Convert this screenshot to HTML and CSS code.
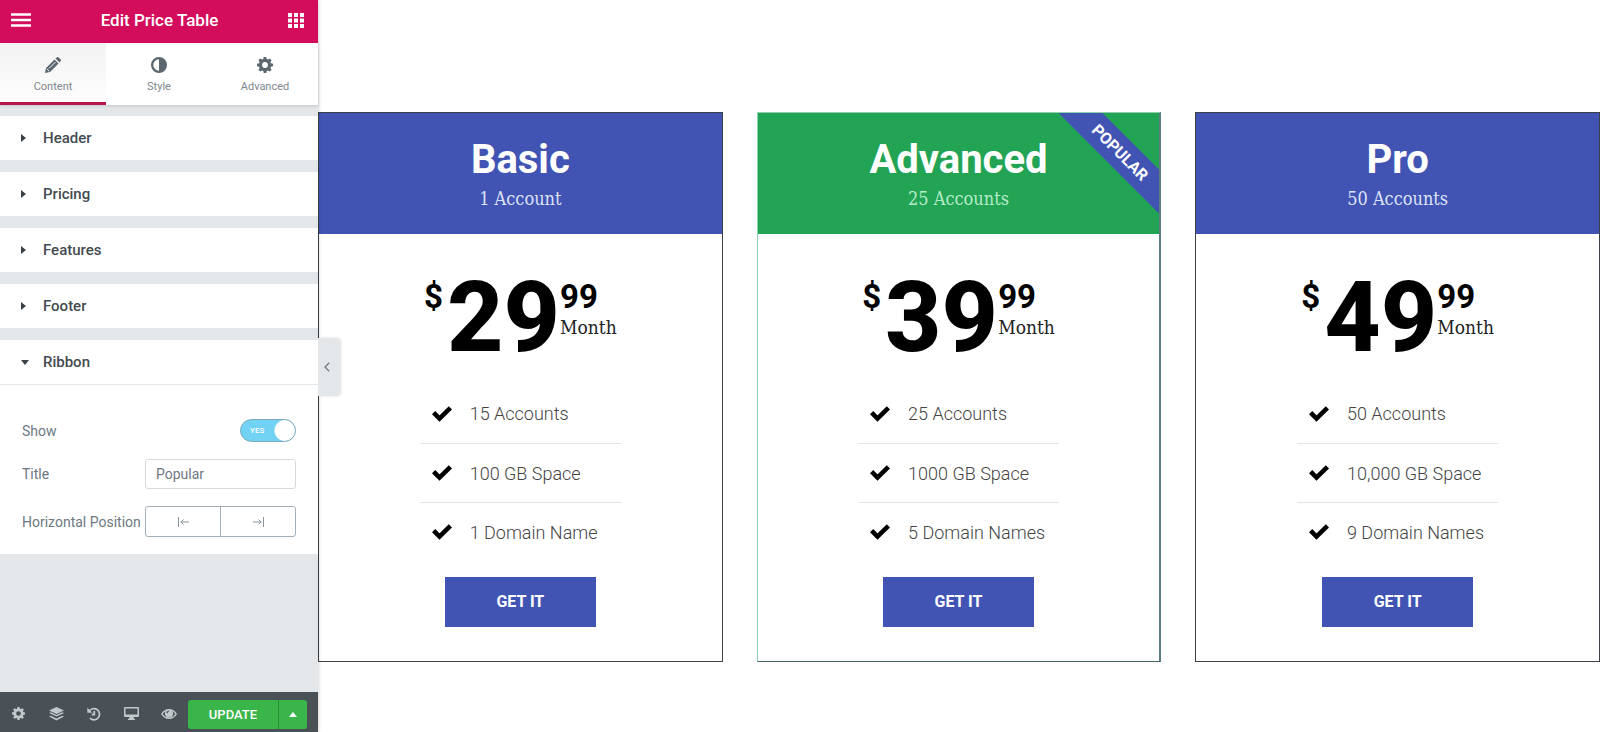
FILE: index.html
```html
<!DOCTYPE html>
<html lang="en">
<head>
    <meta charset="UTF-8">
    <meta name="viewport" content="width=device-width, initial-scale=1.0">
    <title>Edit Price Table</title>
    <link rel="stylesheet" href="styles.css">
</head>
<body>
<!-- shared icons -->
<svg class="icon-defs" aria-hidden="true">
    <symbol id="gear" viewBox="0 0 16 16">
        <path fill-rule="evenodd" d="M6.7 0h2.6l.4 2.1 1.3.5L12.800 1.400l1.800 1.800L13.400 5l.5 1.300 2.100.4v2.600l-2.100.4-.5 1.300 1.200 1.800-1.800 1.800L11 13.400l-1.300.5L9.300 16H6.700l-.4-2.100L5 13.400l-1.800 1.200-1.800-1.800L2.600 11l-.5-1.300L0 9.300V6.700l2.100-.4L2.600 5 1.400 3.200l1.800-1.800L5 2.600l1.300-.5zM8 5.100a2.900 2.900 0 1 0 0 5.800 2.900 2.900 0 0 0 0-5.800z"/>
    </symbol>
    <symbol id="check" viewBox="0 0 20 16">
        <path d="M1.600 6.600L7.500 12.600L18.400 1.800" fill="none" stroke="#000" stroke-width="4.600"/>
    </symbol>
</svg>
<div class="editor">
    <aside class="panel">
        <header class="panel-header">
            <button class="header-btn" aria-label="Menu">
                <svg width="20" height="14" viewBox="0 0 20 14"><path d="M0 1.500h20M0 7h20M0 12.500h20" stroke="#fff" stroke-width="2.600"/></svg>
            </button>
            <h1>Edit Price Table</h1>
            <button class="header-btn" aria-label="Widgets">
                <svg width="16" height="15" viewBox="0 0 16 15"><path d="M0 0h4v4H0zM6 0h4v4H6zM12 0h4v4h-4zM0 5.500h4v4H0zM6 5.500h4v4H6zM12 5.500h4v4h-4zM0 11h4v4H0zM6 11h4v4H6zM12 11h4v4h-4z" fill="#fff"/></svg>
            </button>
        </header>
        <nav class="tabs">
            <button class="tab active">
                <svg width="16" height="16" viewBox="0 0 16 16"><path d="M0 16l1-5L9.500 2.500l4 4L5 15zM10.500 1.500L12 .3q.9-.6 1.700.2l1.800 1.800q.8.8.2 1.700l-1.200 1.500z"/><path d="M1.800 11.800l2.400 2.400M4 11.500L10.500 5" stroke="#f4f4f4" fill="none"/></svg>
                Content
            </button>
            <button class="tab">
                <svg width="16" height="16" viewBox="0 0 16 16"><path fill-rule="evenodd" d="M8 0a8 8 0 1 0 0 16A8 8 0 0 0 8 0zm0 2.300v11.400A5.700 5.700 0 0 1 8 2.300z"/></svg>
                Style
            </button>
            <button class="tab">
                <svg width="16" height="16"><use href="#gear"/></svg>
                Advanced
            </button>
        </nav>
        <div class="sections">
            <button class="section-title"><span class="arrow"></span>Header</button>
            <button class="section-title"><span class="arrow"></span>Pricing</button>
            <button class="section-title"><span class="arrow"></span>Features</button>
            <button class="section-title"><span class="arrow"></span>Footer</button>
            <div class="section-open">
                <button class="section-title" aria-expanded="true"><span class="arrow down"></span>Ribbon</button>
                <div class="controls">
                    <div class="control">
                        <label for="show">Show</label>
                        <span class="switch">
                            <input type="checkbox" id="show" checked>
                            <span class="switch-text">YES</span>
                        </span>
                    </div>
                    <div class="control">
                        <label for="title">Title</label>
                        <input type="text" class="text-input" id="title" value="Popular">
                    </div>
                    <div class="control">
                        <span id="position-label">Horizontal Position</span>
                        <div class="choices" role="radiogroup" aria-labelledby="position-label">
                            <label class="choice">
                                <input type="radio" name="position" value="left" aria-label="Left">
                                <svg width="11" height="10" viewBox="0 0 11 10"><path d="M.5 0v10M2.500 5H11M5.500 2.500L3 5l2.500 2.500"/></svg>
                            </label>
                            <label class="choice">
                                <input type="radio" name="position" value="right" aria-label="Right">
                                <svg width="11" height="10" viewBox="0 0 11 10"><path d="M10.500 0v10M0 5h8.500M5.500 2.500L8 5 5.500 7.500"/></svg>
                            </label>
                        </div>
                    </div>
                </div>
            </div>
        </div>
        <footer class="panel-footer">
            <button class="tool" aria-label="Settings"><svg width="13" height="13"><use href="#gear"/></svg></button>
            <button class="tool" aria-label="Navigator">
                <svg width="15" height="14" viewBox="0 0 15 14"><path d="M7.500 0L15 3.500 7.500 7 0 3.500zM0 6l1.800-.8 5.700 2.700 5.700-2.700L15 6l-7.500 3.600zM0 9.500l1.800-.8 5.700 2.700 5.700-2.700 1.800.8L7.500 13.500z"/></svg>
            </button>
            <button class="tool" aria-label="History">
                <svg width="14" height="14" viewBox="0 0 14 14"><path d="M2 4.500A5.600 5.600 0 1 1 3 11.200M7.300 4v3.500H4.800" fill="none" stroke="#c2c7ca" stroke-width="1.800"/><path d="M.3.8v5h5z"/></svg>
            </button>
            <button class="tool" aria-label="Responsive mode">
                <svg width="15" height="13" viewBox="0 0 15 13"><path fill-rule="evenodd" d="M1 0h13q1 0 1 1v8q0 1-1 1H9.500l.5 1.800h1V13H4v-1.200h1L5.500 10H1q-1 0-1-1V1q0-1 1-1zm.5 1.500v6h12v-6z"/></svg>
            </button>
            <button class="tool" aria-label="Preview">
                <svg width="16" height="10" viewBox="0 0 16 10"><path fill-rule="evenodd" d="M0 5Q3 0 8 0t8 5q-3 5-8 5T0 5zm1.700 0q2.200 3.600 6.300 3.600T14.300 5Q13 2.800 11.200 2q1 1.200 1 2.600a4.200 4.200 0 0 1-8.400 0q0-1.400 1-2.600Q3 2.900 1.700 5zM8 1.500A2.800 2.800 0 0 0 5.400 4.200h1.200Q6.800 2.800 8 2.600z"/></svg>
            </button>
            <div class="update">
                <button class="update-btn">UPDATE</button>
                <button class="update-more" aria-label="Save options"><span class="caret"></span></button>
            </div>
        </footer>
        <button class="collapse" aria-label="Hide panel">
            <svg width="6" height="10" viewBox="0 0 6 10"><path d="M5.200.8L1 5l4.200 4.200" fill="none" stroke="#6d7882" stroke-width="1.300"/></svg>
        </button>
    </aside>

    <main class="preview">
        <section class="card">
            <header class="card-header">
                <h2>Basic</h2>
                <p>1 Account</p>
            </header>
            <div class="price">
                <span class="currency">$</span>
                <span class="amount">29</span>
                <span class="after"><span class="cents">99</span><span class="period">Month</span></span>
            </div>
            <ul class="features">
                <li><svg width="20" height="16"><use href="#check"/></svg>15 Accounts</li>
                <li><svg width="20" height="16"><use href="#check"/></svg>100 GB Space</li>
                <li><svg width="20" height="16"><use href="#check"/></svg>1 Domain Name</li>
            </ul>
            <a class="get-it" href="#">GET IT</a>
        </section>
        <section class="card featured">
            <header class="card-header">
                <h2>Advanced</h2>
                <p>25 Accounts</p>
            </header>
            <div class="price">
                <span class="currency">$</span>
                <span class="amount">39</span>
                <span class="after"><span class="cents">99</span><span class="period">Month</span></span>
            </div>
            <ul class="features">
                <li><svg width="20" height="16"><use href="#check"/></svg>25 Accounts</li>
                <li><svg width="20" height="16"><use href="#check"/></svg>1000 GB Space</li>
                <li><svg width="20" height="16"><use href="#check"/></svg>5 Domain Names</li>
            </ul>
            <a class="get-it" href="#">GET IT</a>
            <div class="ribbon"><span>POPULAR</span></div>
        </section>
        <section class="card">
            <header class="card-header">
                <h2>Pro</h2>
                <p>50 Accounts</p>
            </header>
            <div class="price">
                <span class="currency">$</span>
                <span class="amount">49</span>
                <span class="after"><span class="cents">99</span><span class="period">Month</span></span>
            </div>
            <ul class="features">
                <li><svg width="20" height="16"><use href="#check"/></svg>50 Accounts</li>
                <li><svg width="20" height="16"><use href="#check"/></svg>10,000 GB Space</li>
                <li><svg width="20" height="16"><use href="#check"/></svg>9 Domain Names</li>
            </ul>
            <a class="get-it" href="#">GET IT</a>
        </section>
    </main>
</div>
</body>
</html>
```
FILE: styles.css
```css
* {
    box-sizing: border-box;
}

body {
    margin: 0;
    font-family: Roboto, sans-serif;
    background-color: #fff;
}

h1,
h2,
p,
ul {
    margin: 0;
    padding: 0;
}

button {
    padding: 0;
    border: none;
    background: none;
    font-family: inherit;
    cursor: pointer;
}

svg {
    display: block;
}

.icon-defs {
    position: absolute;
    width: 0;
    height: 0;
}

.editor {
    display: flex;
    min-height: 100vh;
}

/* left panel */
.panel {
    position: relative;
    z-index: 1;
    display: flex;
    flex-direction: column;
    flex: none;
    width: 318px;
    background-color: #e3e7ea;
    box-shadow: 0 0 4px rgba(0, 0, 0, 0.25);
}

.panel-header {
    display: flex;
    align-items: center;
    justify-content: space-between;
    height: 43px;
    padding: 0 14px 3px 11px;
    background-color: #d30c5c;
}

.panel-header h1 {
    font-size: 17px;
    font-weight: 500;
    color: #fff;
}

.tabs {
    display: grid;
    grid-template-columns: repeat(3, 1fr);
    height: 62px;
    background-color: #fff;
    box-shadow: 0 1px 3px rgba(0, 0, 0, 0.15);
}

.tab {
    display: flex;
    flex-direction: column;
    align-items: center;
    gap: 7px;
    padding-top: 14px;
    border-bottom: 3px solid transparent;
    font-size: 11px;
    line-height: 14px;
    color: #7d868e;
}

.tab svg {
    fill: #5c666e;
}

.tab.active {
    border-bottom-color: #b8124f;
    background: linear-gradient(#f3f3f3, #fdfdfd);
}

.sections {
    display: flex;
    flex-direction: column;
    flex: 1;
    gap: 12px;
    padding: 11px 0;
}

.section-title {
    display: flex;
    align-items: center;
    gap: 16px;
    width: 100%;
    height: 44px;
    padding: 0 21px;
    background-color: #fff;
    font-size: 15px;
    font-weight: 500;
    color: #444b50;
}

.arrow {
    width: 6px;
    border: 4px solid transparent;
    border-left: 5px solid #3b4247;
    border-right: 0;
}

.arrow.down {
    width: 8px;
    border: 4px solid transparent;
    border-top: 5px solid #3b4247;
    border-bottom: 0;
    margin-right: -2px;
}

.section-open {
    background-color: #fff;
}

.controls {
    display: flex;
    flex-direction: column;
    gap: 17px;
    padding: 34px 22px 17px;
    border-top: 1px solid #e3e7ea;
}

.control {
    display: flex;
    align-items: center;
    justify-content: space-between;
    font-size: 14px;
    color: #6d7882;
}

.switch {
    display: grid;
    align-items: center;
}

.switch input,
.switch-text {
    grid-area: 1 / 1;
}

.switch input {
    appearance: none;
    width: 56px;
    height: 23px;
    margin: 0;
    border: 1px solid #7fa9b8;
    border-radius: 12px;
    background: radial-gradient(circle at 44px 50%, #fff 10px, transparent 11px) #71d2f3;
}

.switch-text {
    padding-left: 10px;
    font-size: 8px;
    font-weight: 500;
    color: #fff;
    pointer-events: none;
}

.text-input,
.choices {
    width: 151px;
    border: 1px solid #d5dadf;
    border-radius: 3px;
}

.text-input {
    height: 30px;
    padding: 0 10px;
    font-family: inherit;
    font-size: 14px;
    color: #6d7882;
}

.choices {
    display: flex;
    height: 31px;
    border-color: #a4afb7;
}

.choice {
    display: flex;
    flex: 1;
    align-items: center;
    justify-content: center;
}

.choice + .choice {
    border-left: 1px solid #a4afb7;
}

.choice input {
    position: absolute;
    opacity: 0;
}

.choice svg {
    fill: none;
    stroke: #8a949b;
}

.panel-footer {
    display: flex;
    align-items: center;
    height: 40px;
    padding-right: 11px;
    background-color: #495157;
}

.tool {
    display: flex;
    align-items: center;
    justify-content: center;
    flex: 1;
    height: 40px;
    padding-top: 3px;
}

.tool svg {
    fill: #c2c7ca;
}

.update {
    display: flex;
    margin-top: 4px;
    border-radius: 3px;
    overflow: hidden;
    background-color: #39b54a;
}

.update-btn {
    width: 90px;
    height: 29px;
    font-size: 13px;
    font-weight: 500;
    color: #fff;
}

.update-more {
    display: flex;
    align-items: center;
    justify-content: center;
    width: 29px;
    border-left: 1px solid #2b8b39;
}

.caret {
    border: 4px solid transparent;
    border-top: 0;
    border-bottom: 5px solid #fff;
}

/* sits over the preview, on the panel's edge */
.collapse {
    position: absolute;
    top: 338px;
    left: 100%;
    display: flex;
    align-items: center;
    width: 21px;
    height: 58px;
    padding-left: 6px;
    border-radius: 0 3px 3px 0;
    background-color: #e3e7ea;
    box-shadow: 2px 0 3px rgba(0, 0, 0, 0.12);
}

/* price tables */
.preview {
    display: grid;
    grid-template-columns: repeat(3, 1fr);
    align-items: start;
    gap: 34px;
    flex: 1;
    padding: 112px 0 60px;
}

.card {
    position: relative;
    display: flex;
    flex-direction: column;
    align-items: center;
    padding-bottom: 34px;
    border: 1px solid #3c4147;
}

.card-header {
    width: 100%;
    height: 121px;
    padding-top: 23px;
    background-color: #4154b3;
    text-align: center;
    color: #fff;
}

.card-header h2 {
    font-size: 40px;
    font-weight: 700;
    line-height: 48px;
}

.card-header p {
    font-family: "Roboto Slab", "DejaVu Serif Condensed", "DejaVu Serif", serif;
    font-size: 18px;
    line-height: 30px;
    color: #dde2f7;
}

.price {
    display: flex;
    align-items: flex-start;
    padding: 42px 0 24px;
    color: #000;
}

.currency,
.cents {
    font-size: 33px;
    font-weight: 700;
    line-height: 42px;
}

.amount {
    margin: 0 0 0 4px;
    font-size: 98px;
    font-weight: 800;
    line-height: 84px;
}

.after {
    display: flex;
    flex-direction: column;
}

.period {
    font-family: "Roboto Slab", "DejaVu Serif Condensed", "DejaVu Serif", serif;
    font-size: 19px;
    line-height: 18px;
    color: #222;
}

.features {
    width: 50%;
    list-style: none;
}

.features li {
    display: flex;
    align-items: center;
    gap: 18px;
    height: 59px;
    padding-left: 12px;
    font-size: 18px;
    font-weight: 300;
    color: #444;
    white-space: nowrap;
}

.features li + li {
    border-top: 1px solid #e4e4e4;
}

.get-it {
    width: 151px;
    margin-top: 16px;
    background-color: #4154b3;
    font-size: 16px;
    font-weight: 700;
    line-height: 50px;
    text-align: center;
    text-decoration: none;
    color: #fff;
}

.featured {
    border-color: #8fd0b0 #5d7d80 #46625a #8fd0b0;
    border-right-width: 2px;
}

.featured .card-header {
    background-color: #23a455;
}

.featured .card-header p {
    color: #b5ebc9;
}

.ribbon {
    position: absolute;
    top: 0;
    right: 0;
    width: 120px;
    height: 120px;
    overflow: hidden;
}

.ribbon span {
    position: absolute;
    top: 24px;
    right: -61px;
    width: 200px;
    background-color: #4154b3;
    font-size: 16px;
    font-weight: 700;
    line-height: 31px;
    text-align: center;
    color: #fff;
    transform: rotate(45deg);
}
```
